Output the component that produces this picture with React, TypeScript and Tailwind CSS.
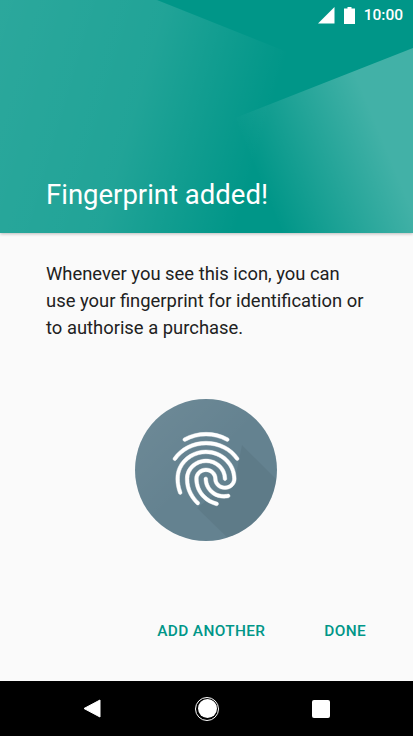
import React from 'react';

const FINGERPRINT =
  'M17.81 4.47c-.08 0-.16-.02-.23-.06C15.66 3.42 14 3 12.01 3c-1.98 0-3.86.47-5.58 1.41-.24.13-.54.04-.68-.2-.13-.24-.04-.55.2-.68C7.82 2.52 9.86 2 12.01 2c2.13 0 3.99.47 6.03 1.52.25.13.34.43.21.67-.09.18-.26.28-.44.28zM3.5 9.72c-.1 0-.2-.03-.29-.09-.23-.16-.28-.47-.12-.7.99-1.4 2.25-2.5 3.75-3.27C9.98 4.04 14 4.03 17.15 5.65c1.5.77 2.76 1.86 3.75 3.25.16.22.11.54-.12.7-.23.16-.54.11-.7-.12-.9-1.26-2.04-2.25-3.39-2.94-2.87-1.47-6.54-1.47-9.4.01-1.36.7-2.5 1.7-3.4 2.96-.08.14-.23.21-.39.21zm6.25 12.07c-.13 0-.26-.05-.35-.15-.87-.87-1.34-1.43-2.01-2.64-.69-1.23-1.05-2.73-1.05-4.34 0-2.97 2.54-5.39 5.66-5.39s5.66 2.42 5.66 5.39c0 .28-.22.5-.5.5s-.5-.22-.5-.5c0-2.42-2.09-4.39-4.66-4.39-2.57 0-4.66 1.97-4.66 4.39 0 1.44.32 2.77.93 3.85.64 1.15 1.08 1.64 1.85 2.42.19.2.19.51 0 .71-.11.1-.24.15-.37.15zm7.17-1.85c-1.19 0-2.24-.3-3.1-.89-1.49-1.01-2.38-2.65-2.38-4.39 0-.28.22-.5.5-.5s.5.22.5.5c0 1.41.72 2.74 1.94 3.56.71.48 1.54.71 2.54.71.24 0 .64-.03 1.04-.1.27-.05.53.13.58.41.05.27-.13.53-.41.58-.57.11-1.07.12-1.21.12zM14.91 22c-.04 0-.09-.01-.13-.02-1.59-.44-2.63-1.03-3.72-2.1-1.4-1.39-2.17-3.24-2.17-5.22 0-1.62 1.38-2.94 3.08-2.94 1.7 0 3.08 1.32 3.08 2.94 0 1.07.93 1.94 2.08 1.94s2.08-.87 2.08-1.94c0-3.77-3.25-6.83-7.25-6.83-2.84 0-5.44 1.58-6.61 4.03-.39.81-.59 1.76-.59 2.8 0 .78.07 2.01.67 3.61.1.26-.03.55-.29.64-.26.1-.55-.04-.64-.29-.49-1.31-.73-2.61-.73-3.96 0-1.2.23-2.29.68-3.24 1.33-2.79 4.28-4.6 7.51-4.6 4.55 0 8.25 3.51 8.25 7.83 0 1.62-1.38 2.94-3.08 2.94s-3.08-1.32-3.08-2.94c0-1.07-.93-1.94-2.08-1.94s-2.08.87-2.08 1.94c0 1.71.66 3.31 1.87 4.51.95.94 1.86 1.46 3.27 1.85.27.07.42.35.35.61-.05.23-.26.38-.47.38z';

const HeaderArt = () => (
  <svg className="absolute inset-0" width="413" height="233" viewBox="0 0 413 233">
    <defs>
      <linearGradient id="leftFade" x1="0" y1="0" x2="280" y2="82" gradientUnits="userSpaceOnUse">
        <stop offset="0" stopColor="#fff" stopOpacity="0.17" />
        <stop offset="0.55" stopColor="#fff" stopOpacity="0.13" />
        <stop offset="1" stopColor="#fff" stopOpacity="0" />
      </linearGradient>
      <linearGradient id="rightFade" x1="255" y1="170" x2="375" y2="120" gradientUnits="userSpaceOnUse">
        <stop offset="0" stopColor="#fff" stopOpacity="0" />
        <stop offset="1" stopColor="#fff" stopOpacity="0.26" />
      </linearGradient>
    </defs>
    <polygon points="0,0 157,0 413,102 413,233 0,233" fill="url(#leftFade)" />
    <polygon points="413,48 100,171 100,233 413,233" fill="url(#rightFade)" />
  </svg>
);

const StatusBar = () => (
  <div className="relative flex h-[30px] items-center justify-end pr-[10px] pt-[1px] text-white">
    <svg width="17" height="17" viewBox="0 0 17 17" className="mr-[9px]">
      <path d="M0 16.500 16.500 0v16.500z" fill="#fff" />
    </svg>
    <svg width="11" height="17" viewBox="0 0 11 17" className="mr-[9px]">
      <path d="M3.500 0h4v1.500H11v15.500H0V1.500h3.500z" fill="#fff" />
    </svg>
    <span className="text-[15.5px] font-medium leading-none">10:00</span>
  </div>
);

const BadgeIcon = () => (
  <div className="relative ml-[135px] h-[142px] w-[142px] overflow-hidden rounded-full bg-[#648290]">
    <svg className="absolute inset-0" width="142" height="142" viewBox="0 0 142 142">
      <defs>
        <linearGradient id="badgeShine" x1="0" y1="0" x2="142" y2="142" gradientUnits="userSpaceOnUse">
          <stop offset="0" stopColor="#fff" stopOpacity="0.07" />
          <stop offset="0.5" stopColor="#fff" stopOpacity="0" />
        </linearGradient>
      </defs>
      <rect width="142" height="142" fill="url(#badgeShine)" />
      <polygon points="107,46 150,89 150,150 104,150 62,109 80,95 100,80" fill="#000" fillOpacity="0.05" />
      <g transform="translate(27 26) scale(3.67)">
        <path d={FINGERPRINT} fill="#fff" stroke="#fff" strokeWidth="0.12" />
      </g>
    </svg>
  </div>
);

const NavBar = () => (
  <div className="flex h-[55px] items-center bg-black pl-[83px]">
    <svg width="18" height="19" viewBox="0 0 18 19" className="mr-[94px]">
      <path d="M17 1v17L1 9.500z" fill="#fff" stroke="#fff" strokeWidth="1" strokeLinejoin="round" />
    </svg>
    <div className="flex h-[24px] w-[24px] items-center justify-center rounded-full border border-white">
      <div className="h-[19px] w-[19px] rounded-full bg-white" />
    </div>
    <div className="ml-[93px] h-[18px] w-[18px] rounded-[2px] bg-white" />
  </div>
);

export default function App() {
  return (
    <div className="flex h-[736px] w-[413px] flex-col overflow-hidden bg-[#fafafa] font-['Roboto',sans-serif]">
      <header className="relative z-10 h-[233px] shrink-0 bg-[#009688] shadow-[0_1px_3px_rgba(0,0,0,0.25)]">
        <HeaderArt />
        <StatusBar />
        <h1 className="relative mt-[148px] pl-[46px] text-[27.5px] leading-[34px] text-white">Fingerprint added!</h1>
      </header>

      <main className="flex flex-1 flex-col">
        <p className="px-[46px] pt-[27px] text-[18.4px] leading-[27px] text-[#212121]">
          Whenever you see this icon, you can use your fingerprint for identification or to authorise a purchase.
        </p>
        <div className="mt-[58px] flex">
          <BadgeIcon />
        </div>
        <div className="mt-[80px] flex justify-end gap-[59px] pr-[47px] text-[15.4px] font-medium leading-[20px] tracking-[0.35px] text-[#009688]">
          <span>ADD ANOTHER</span>
          <span>DONE</span>
        </div>
      </main>

      <NavBar />
    </div>
  );
}
